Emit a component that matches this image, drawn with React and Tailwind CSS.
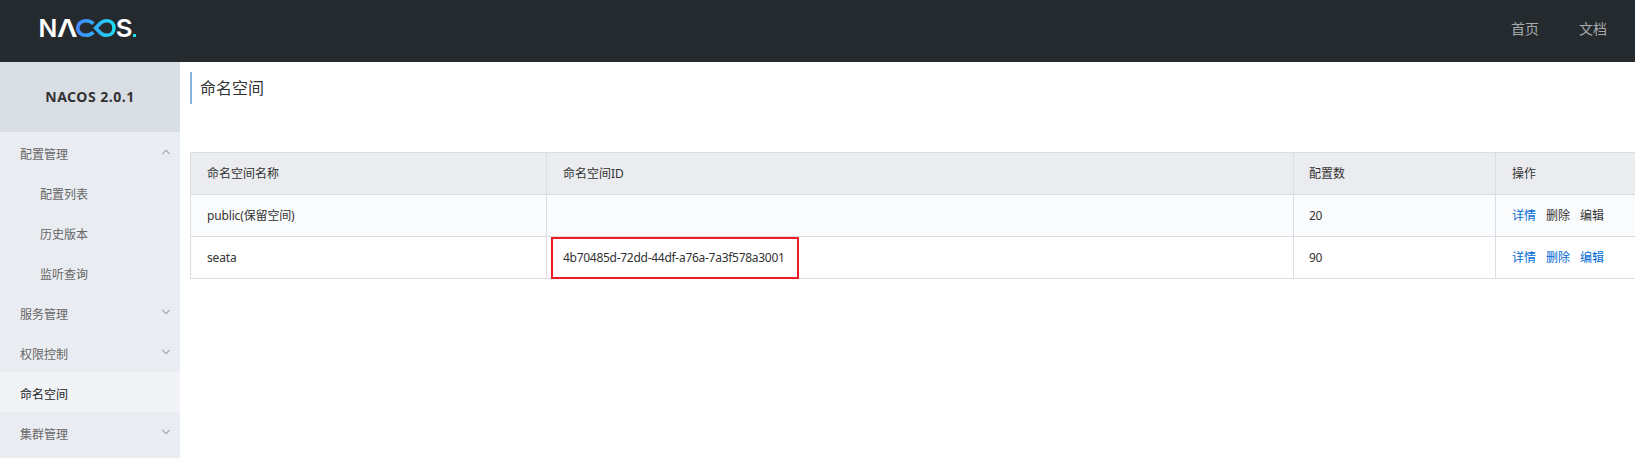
const menu = [
  { label: "配置管理", arrow: "up" },
  { label: "配置列表", child: true },
  { label: "历史版本", child: true },
  { label: "监听查询", child: true },
  { label: "服务管理", arrow: "down" },
  { label: "权限控制", arrow: "down" },
  { label: "命名空间", active: true },
  { label: "集群管理", arrow: "down" },
];

const rows = [
  { name: "public(保留空间)", id: "", count: 20, locked: true },
  { name: "seata", id: "4b70485d-72dd-44df-a76a-7a3f578a3001", count: 90 },
];

function Logo() {
  return (
    <svg width="108" height="44" viewBox="-4 -10 108 44" className="block" aria-label="NACOS">
      <defs>
        <linearGradient id="loop" gradientUnits="userSpaceOnUse" x1="37" y1="0" x2="77" y2="0">
          <stop offset="0" stopColor="#4289ff" />
          <stop offset="0.5" stopColor="#2fb2f8" />
          <stop offset="1" stopColor="#1ce4f4" />
        </linearGradient>
      </defs>
      <g fill="#fff" fontFamily="Inter, sans-serif" fontWeight="600" fontSize="24.5">
        <text x="-1.6" y="21" textLength="18.8" lengthAdjust="spacingAndGlyphs">N</text>
        <text x="17" y="21" textLength="20.5" lengthAdjust="spacingAndGlyphs">Λ</text>
        <text x="75.8" y="21" textLength="16.8" lengthAdjust="spacingAndGlyphs">S</text>
      </g>
      <g fill="none" stroke="url(#loop)" strokeWidth="3.6">
        <path d="M53.4 7.6 C51.2 5.6 48.8 4.7 45.6 4.7 C41 4.7 37.7 8 37.7 12 C37.7 16 41 19.3 45.6 19.3 C48.8 19.3 51.2 18.4 53.4 16.4" />
        <path d="M55.6 12 L60.2 7.4 C62.2 5.5 64.2 4.7 67 4.7 C71.4 4.7 74 8 74 12 C74 16 71.4 19.3 67 19.3 C64.2 19.3 62.2 18.5 60.2 16.6 Z" />
      </g>
      <rect x="93" y="18" width="3" height="3" rx="0.5" fill="#1ce4f4" />
    </svg>
  );
}

function Arrow({ dir }) {
  return (
    <svg width="8" height="6" viewBox="0 0 8 6" fill="none" stroke="#7d8085" strokeWidth="1">
      <path d={dir === "up" ? "M0.5 5 L4 1.2 L7.5 5" : "M0.5 1 L4 4.8 L7.5 1"} />
    </svg>
  );
}

const grid = "grid grid-cols-[356px_747px_202px_1fr] border-b border-[#dcdde3]";
const cell = "flex items-center border-l border-[#dcdde3] pl-4";

export default function App() {
  return (
    <div className="flex h-[458px] w-[1635px] flex-col overflow-hidden bg-white text-xs text-[#333] [font-family:'Noto_Sans','Noto_Sans_CJK_SC',sans-serif]">
      <header className="flex h-[62px] shrink-0 items-start justify-between bg-[#252a2f] pl-9 pr-7">
        <div className="pt-1.5">
          <Logo />
        </div>
        <nav className="flex gap-10 pt-[19px] text-sm leading-5 text-[#a8aaac]">
          <a>首页</a>
          <a>文档</a>
        </nav>
      </header>
      <div className="flex flex-1">
        <aside className="flex w-[180px] shrink-0 flex-col bg-[#e9ecf1]">
          <div className="flex h-[70px] shrink-0 items-center justify-center bg-[#d9dde4] text-sm font-bold [font-family:'Noto_Sans',sans-serif]">
            <span className="tracking-[0.5px]">NACOS 2.0.1</span>
          </div>
          {menu.map((m) => (
            <div
              key={m.label}
              className={`flex h-10 shrink-0 items-center justify-between pr-2.5 ${m.child ? "pl-10" : "pl-5"} ${m.active ? "bg-[#f1f3f7] text-[#222]" : "text-[#666]"}`}
            >
              <span className="pt-1.5">{m.label}</span>
              {m.arrow && <Arrow dir={m.arrow} />}
            </div>
          ))}
        </aside>
        <main className="flex min-w-0 flex-1 flex-col pl-2.5 pt-2.5">
          <h1 className="flex h-8 items-center border-l-2 border-[#85b4de] pl-2 text-base">命名空间</h1>
          <div className="mt-12 flex flex-col">
            <div className={`${grid} h-[43px] border-t bg-[#ebecf0]`}>
              <div className={cell}>命名空间名称</div>
              <div className={cell}>命名空间ID</div>
              <div className={`${cell} pl-[15px]`}>配置数</div>
              <div className={cell}>操作</div>
            </div>
            {rows.map((r) => (
              <div key={r.name} className={`${grid} h-[42px] ${r.locked ? "bg-[#fafbfd]" : "bg-white"}`}>
                <div className={`${cell} tracking-[-0.15px]`}>{r.name}</div>
                <div className={`${cell} relative`}>
                  <span className="tracking-[-0.28px]">{r.id}</span>
                  {r.id && <div className="absolute left-1 top-0 h-[42px] w-[248px] border-2 border-[#ed1c24]" />}
                </div>
                <div className={`${cell} pl-[15px] tracking-[-0.3px]`}>{r.count}</div>
                <div className={`${cell} gap-2.5 text-[#0068d2]`}>
                  <a>详情</a>
                  <a className={r.locked ? "text-[#333]" : ""}>删除</a>
                  <a className={r.locked ? "text-[#333]" : ""}>编辑</a>
                </div>
              </div>
            ))}
          </div>
        </main>
      </div>
    </div>
  );
}
